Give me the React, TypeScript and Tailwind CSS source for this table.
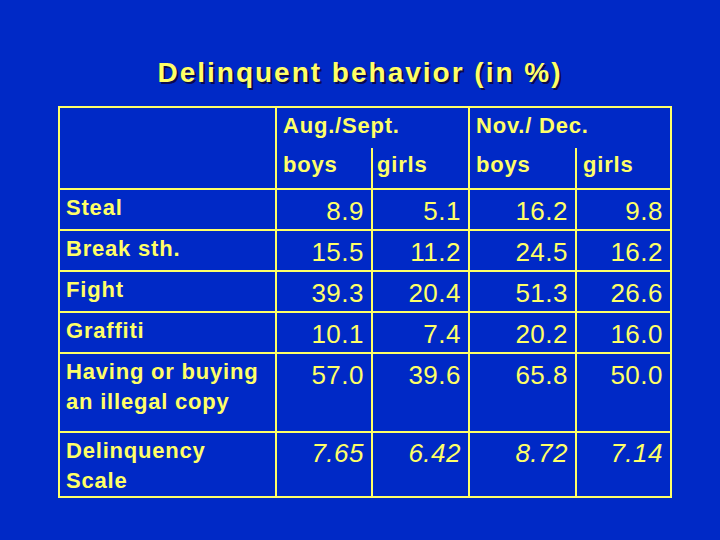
import React from 'react';

const rows = [
  { label: ['Steal'], values: ['8.9', '5.1', '16.2', '9.8'], h: 'h-[41px]' },
  { label: ['Break sth.'], values: ['15.5', '11.2', '24.5', '16.2'], h: 'h-[41px]' },
  { label: ['Fight'], values: ['39.3', '20.4', '51.3', '26.6'], h: 'h-[41px]' },
  { label: ['Graffiti'], values: ['10.1', '7.4', '20.2', '16.0'], h: 'h-[41px]' },
  { label: ['Having or buying', 'an illegal copy'], values: ['57.0', '39.6', '65.8', '50.0'], h: 'h-[79px]' },
];

const scale = { label: ['Delinquency', 'Scale'], values: ['7.65', '6.42', '8.72', '7.14'] };

const line = 'border-2 border-[#ffff66]';

function Label({ lines }: { lines: string[] }) {
  return (
    <td className={`${line} align-top pl-[6px] pt-[3px] font-bold text-[22px] leading-[30px] tracking-[0.8px]`}>
      {lines.map((l) => (
        <div key={l}>{l}</div>
      ))}
    </td>
  );
}

export default function App() {
  return (
    <div
      className="w-[720px] h-[540px] bg-[#0029c6] text-[#ffff66] flex flex-col pt-[57px]"
      style={{ fontFamily: '"Liberation Sans", Arial, sans-serif' }}
    >
      <h1 className="self-center text-[28px] leading-[32px] font-bold tracking-[2px] [text-shadow:2px_2px_0_#0a0a50]">
        Delinquent behavior (in %)
      </h1>

      <table className="mt-[17px] ml-[58px] border-collapse table-fixed w-[612px]">
        <colgroup>
          <col className="w-[217px]" />
          <col className="w-[96px]" />
          <col className="w-[97px]" />
          <col className="w-[107px]" />
          <col className="w-[95px]" />
        </colgroup>
        <thead>
          <tr className="h-[41px] font-bold text-[22px] leading-[30px] tracking-[0.8px] text-left">
            <th rowSpan={2} className={line}></th>
            <th colSpan={2} className={`${line} border-b-0 align-top pl-[6px] pt-[3px] font-bold`}>
              Aug./Sept.
            </th>
            <th colSpan={2} className={`${line} border-b-0 align-top pl-[6px] pt-[3px] font-bold`}>
              Nov./ Dec.
            </th>
          </tr>
          <tr className="h-[41px] font-bold text-[22px] leading-[30px] tracking-[0.8px] text-left">
            <th className={`${line} border-t-0 align-top pl-[6px] pt-[2px] font-bold`}>boys</th>
            <th className={`${line} border-t-0 align-top pl-[4px] pt-[2px] font-bold`}>girls</th>
            <th className={`${line} border-t-0 align-top pl-[6px] pt-[2px] font-bold`}>boys</th>
            <th className={`${line} border-t-0 align-top pl-[6px] pt-[2px] font-bold`}>girls</th>
          </tr>
        </thead>
        <tbody>
          {rows.map((r) => (
            <tr key={r.label[0]} className={r.h}>
              <Label lines={r.label} />
              {r.values.map((v, i) => (
                <td
                  key={i}
                  className={`${line} align-top text-right pr-[7px] pt-[6px] text-[26px] leading-[30px] tracking-[0.5px]`}
                >
                  {v}
                </td>
              ))}
            </tr>
          ))}
          <tr className="h-[65px]">
            <Label lines={scale.label} />
            {scale.values.map((v, i) => (
              <td
                key={i}
                className={`${line} align-top text-right pr-[7px] pt-[5px] text-[26px] leading-[30px] tracking-[0.5px] italic`}
              >
                {v}
              </td>
            ))}
          </tr>
        </tbody>
      </table>
    </div>
  );
}
